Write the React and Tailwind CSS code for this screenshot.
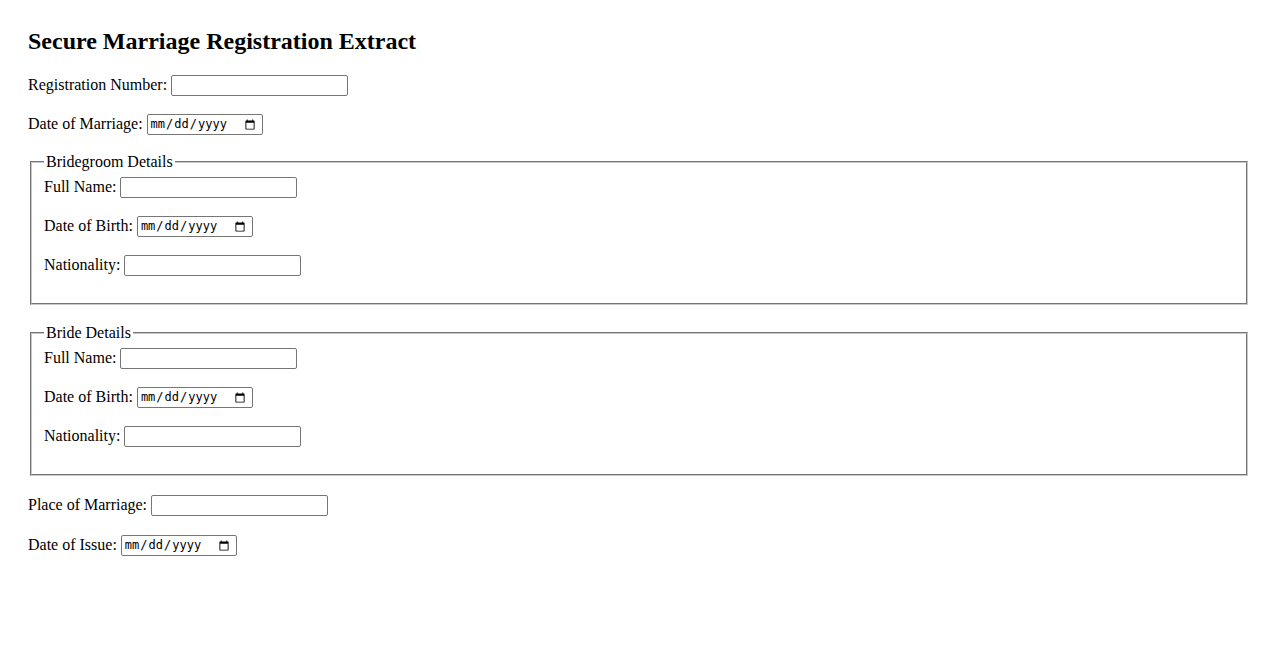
import React from "react";

const serif = { fontFamily: '"Liberation Serif", "Times New Roman", serif' };

function TextRow({ label, mt = "mt-[18px]" }) {
  return (
    <div className={`${mt} flex items-center h-[21px] text-[16px] text-black`}>
      <label className="whitespace-pre mb-[2px]">{label} </label>
      <input
        type="text"
        className="w-[177px] h-[21px] border border-[#767676] rounded-[2px] px-[2px] py-[1px] bg-white text-[13px] outline-none"
      />
    </div>
  );
}

function DateRow({ label, mt = "mt-[18px]" }) {
  return (
    <div className={`${mt} flex items-center h-[21px] text-[16px] text-black`}>
      <label className="whitespace-pre mb-[2px]">{label} </label>
      <input
        type="date"
        className="w-[116px] h-[21px] border border-[#767676] rounded-[2px] pl-[2px] pr-[4px] py-0 bg-white text-[12px] leading-[19px] text-black font-['DejaVu_Sans_Mono',monospace] outline-none"
      />
    </div>
  );
}

function Group({ title, mt }) {
  return (
    <fieldset
      className={`${mt} mx-[2px] border-2 border-[#c8c8c8] [border-style:groove] px-[12px] pt-0 pb-[27px]`}
    >
      <legend className="px-[2px] text-[16px] leading-[18px] h-[18px] text-black">
        {title}
      </legend>
      <TextRow label="Full Name:" mt="mt-[6px]" />
      <DateRow label="Date of Birth:" />
      <TextRow label="Nationality:" />
    </fieldset>
  );
}

export default function App() {
  return (
    <div className="min-h-[650px] bg-white pt-[28px] px-[28px] text-black" style={serif}>
      <h2 className="text-[24px] leading-[26px] h-[28px] font-bold">
        Secure Marriage Registration Extract
      </h2>
      <TextRow label="Registration Number:" mt="mt-[19px]" />
      <DateRow label="Date of Marriage:" />
      <Group title="Bridegroom Details" mt="mt-[18px]" />
      <Group title="Bride Details" mt="mt-[19px]" />
      <TextRow label="Place of Marriage:" mt="mt-[19px]" />
      <DateRow label="Date of Issue:" mt="mt-[19px]" />
    </div>
  );
}
